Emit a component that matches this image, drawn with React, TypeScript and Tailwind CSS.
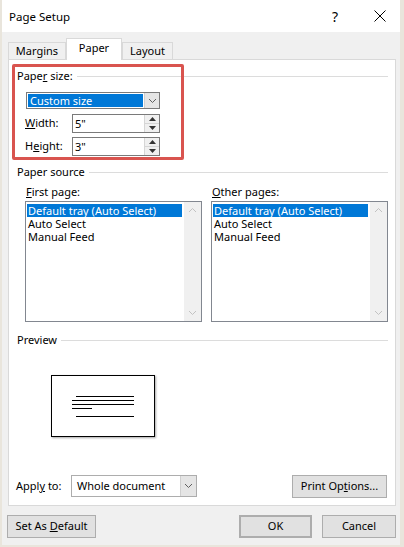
import React from 'react';

const font = { fontFamily: '"Noto Sans", "Open Sans", sans-serif' };

function Chevron({ up = false, className = '' }: { up?: boolean; className?: string }) {
  return (
    <svg width="9" height="6" viewBox="0 0 9 6" className={className}>
      <path d={up ? 'M1 5 L4.5 1.5 L8 5' : 'M1 1 L4.5 4.5 L8 1'} fill="none" stroke="currentColor" strokeWidth="1" />
    </svg>
  );
}

function SectionHeader({ children }: { children: React.ReactNode }) {
  return (
    <div className="flex items-center h-[16px] gap-[4px]">
      <span className="whitespace-nowrap">{children}</span>
      <div className="flex-1 h-px bg-[#dcdcdc]" />
    </div>
  );
}

function Spinner() {
  return (
    <div className="w-[15px] h-full border-l border-[#d6d6d6] bg-[#f0f0f0] flex flex-col">
      <div className="flex-1 flex items-center justify-center border-b border-[#d6d6d6]">
        <svg width="7" height="4" viewBox="0 0 7 4"><path d="M0 4 L3.5 0 L7 4 Z" fill="#333" /></svg>
      </div>
      <div className="flex-1 flex items-center justify-center">
        <svg width="7" height="4" viewBox="0 0 7 4"><path d="M0 0 L3.5 4 L7 0 Z" fill="#333" /></svg>
      </div>
    </div>
  );
}

function ListBox({ className = '' }: { className?: string }) {
  const items = ['Default tray (Auto Select)', 'Auto Select', 'Manual Feed'];
  return (
    <div className={`h-[121px] border border-[#828790] bg-white flex ${className}`}>
      <div className="flex-1 pt-[2px] pl-[1px] pr-[2px]">
        {items.map((t, i) => (
          <div
            key={t}
            className={`h-[13px] leading-[13px] pl-[1px] whitespace-nowrap ${i === 0 ? 'bg-[#0078d7] text-white' : 'text-black'}`}
          >
            {t}
          </div>
        ))}
      </div>
      <div className="w-[17px] bg-[#f0f0f0] flex flex-col justify-between items-center py-[5px] text-[#c2c2c2]">
        <Chevron up />
        <Chevron />
      </div>
    </div>
  );
}

function Button({ children, className = '' }: { children: React.ReactNode; className?: string }) {
  return (
    <div className={`h-[23px] border border-[#adadad] bg-[#e1e1e1] flex items-center justify-center ${className}`}>
      <span className="whitespace-nowrap">{children}</span>
    </div>
  );
}

export default function App() {
  return (
    <div
      className="w-[404px] h-[547px] bg-[#f0f0f0] border-l-2 border-r-4 border-b-2 border-[#e9e5dc] flex flex-col text-[11px] text-black overflow-hidden"
      style={font}
    >
      {/* title bar */}
      <div className="h-[32px] bg-white flex items-center pl-[7px]">
        <span className="text-[11.5px] mt-[1px]">Page Setup</span>
        <span className="ml-auto mr-[36px] text-[14px]">?</span>
        <svg width="12" height="12" viewBox="0 0 12 12" className="mr-[14px]">
          <path d="M0.5 0.5 L11.5 11.5 M11.5 0.5 L0.5 11.5" stroke="#000" strokeWidth="1" />
        </svg>
      </div>

      <div className="flex-1 pl-[6px] pr-[4px] pt-[6px] flex flex-col">
        {/* tabs */}
        <div className="flex items-end h-[21px] relative z-10">
          <div className="w-[58px] h-[17px] border border-b-0 border-[#d9d9d9] bg-[#f0f0f0] flex items-center justify-center">
            Margins
          </div>
          <div className="w-[56px] h-[22px] border border-b-0 border-[#d9d9d9] bg-white flex items-center justify-center -mb-px pb-[3px]">
            Paper
          </div>
          <div className="w-[51px] h-[17px] border border-b-0 border-[#d9d9d9] bg-[#f0f0f0] flex items-center justify-center">
            Layout
          </div>
        </div>

        {/* panel */}
        <div className="h-[447px] bg-white border border-[#d9d9d9] relative pl-[8px] pr-[7px] pt-[8px] flex flex-col">
          {/* red annotation box */}
          <div className="absolute left-[3px] top-[4px] w-[172px] h-[96px] border-[3px] border-[#d9544f] rounded-[2px] pointer-events-none" />

          <SectionHeader>
            Pape<u>r</u> size:
          </SectionHeader>

          <div className="ml-[9px] mt-[8px] w-[134px] h-[17px] border border-[#7a7a7a] flex">
            <div className="flex-1 p-[1px]">
              <div className="h-full bg-[#0078d7] text-white leading-[13px] pl-[2px]">Custom size</div>
            </div>
            <div className="w-[15px] bg-[#e5e5e5] border-l border-[#cfcfcf] flex items-center justify-center text-[#606060]">
              <Chevron />
            </div>
          </div>

          <div className="flex items-center mt-[5px] ml-[8px] h-[19px]">
            <span className="w-[47px]"><u>W</u>idth:</span>
            <div className="w-[88px] h-full border border-[#7a7a7a] flex">
              <span className="flex-1 pl-[2px] leading-[17px]">5"</span>
              <Spinner />
            </div>
          </div>
          <div className="flex items-center mt-[4px] ml-[8px] h-[19px]">
            <span className="w-[47px]">H<u>e</u>ight:</span>
            <div className="w-[88px] h-full border border-[#7a7a7a] flex">
              <span className="flex-1 pl-[2px] leading-[17px]">3"</span>
              <Spinner />
            </div>
          </div>

          <div className="mt-[8px]">
            <SectionHeader>Paper source</SectionHeader>
          </div>

          <div className="flex gap-[9px] ml-[8px] mt-[4px]">
            <div className="w-[177px]">
              <div className="h-[16px] leading-[16px] ml-[1px]"><u>F</u>irst page:</div>
              <ListBox className="mt-[1px]" />
            </div>
            <div className="w-[177px]">
              <div className="h-[16px] leading-[16px] ml-[1px]"><u>O</u>ther pages:</div>
              <ListBox className="mt-[1px]" />
            </div>
          </div>

          <div className="mt-[10px]">
            <SectionHeader>Preview</SectionHeader>
          </div>

          {/* preview page */}
          <div className="ml-[34px] mt-[27px] w-[104px] h-[62px] border border-black bg-white shadow-[1px_1px_2px_rgba(0,0,0,0.35)] flex flex-col pt-[20px] pl-[20px]">
            <div className="ml-[4px] w-[58px] h-px bg-black" />
            <div className="mt-[3px] w-[62px] h-px bg-black" />
            <div className="mt-[3px] w-[62px] h-px bg-black" />
            <div className="mt-[3px] w-[20px] h-px bg-black" />
            <div className="mt-[7px] ml-[4px] w-[58px] h-px bg-black" />
          </div>

          <div className="flex items-center mt-[38px] h-[22px] -ml-px">
            <span className="w-[55px]">Appl<u>y</u> to:</span>
            <div className="w-[126px] h-full border border-[#adadad] bg-white flex">
              <span className="flex-1 pl-[5px] leading-[20px]">Whole document</span>
              <div className="w-[16px] bg-[#e5e5e5] border-l border-[#cfcfcf] flex items-center justify-center text-[#606060]">
                <Chevron />
              </div>
            </div>
            <Button className="ml-auto w-[95px] h-[22px] mr-[1px]">
              Print Op<u>t</u>ions...
            </Button>
          </div>
        </div>

        {/* bottom buttons */}
        <div className="flex mt-[9px] -ml-px">
          <Button className="w-[89px]">
            Set As <u>D</u>efault
          </Button>
          <Button className="ml-auto w-[73px] border-2 border-[#0078d7]">OK</Button>
          <Button className="ml-[10px] w-[74px]">Cancel</Button>
        </div>
      </div>
    </div>
  );
}
